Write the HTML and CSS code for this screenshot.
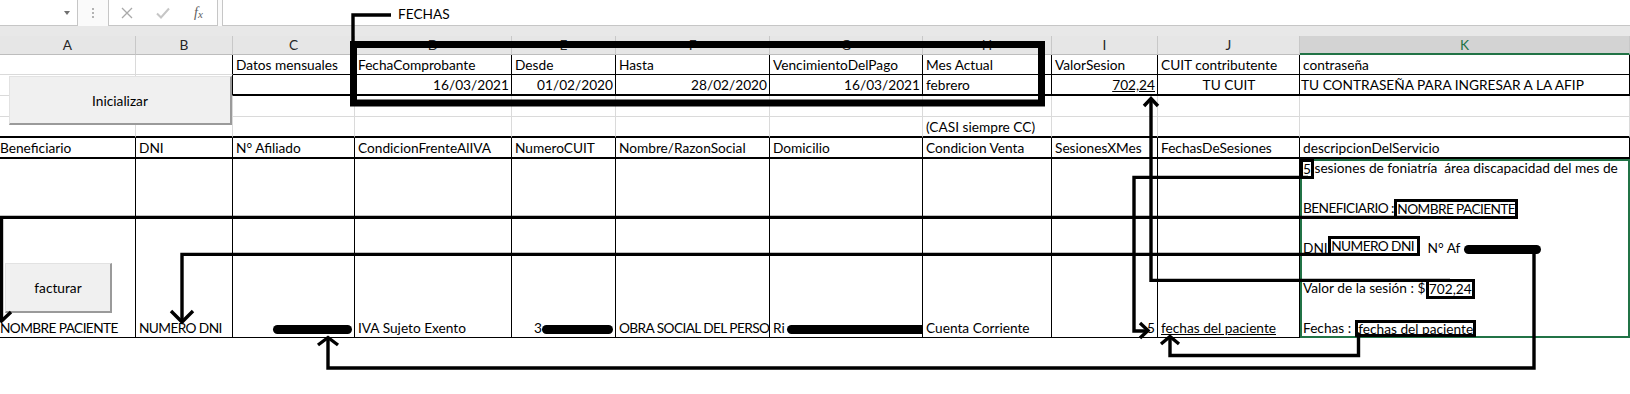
FILE: index.html
```html
<!DOCTYPE html>
<html lang="es">
<head>
<meta charset="utf-8">
<title>Facturación AFIP</title>
<link rel="stylesheet" href="styles.css">
</head>
<body>
<div class="app">
  <div class="formula-bar">
    <div class="namebox"><span class="dropdown"></span></div>
    <div class="grip"><i></i><i></i><i></i></div>
    <div class="fxbox">
      <svg class="ico-x" width="12" height="12" viewBox="0 0 12 12"><path d="M1 1L11 11M11 1L1 11"/></svg>
      <svg class="ico-check" width="14" height="12" viewBox="0 0 14 12"><path d="M1 6.5L5 10.5L13 1.5"/></svg>
      <span class="fx">f<span class="fx-x">x</span></span>
    </div>
    <div class="formula-input"></div>
  </div>
  <div class="band"></div>

  <div class="sheet">
    <div class="c h">A</div><div class="c h">B</div><div class="c h">C</div><div class="c h">D</div><div class="c h">E</div><div class="c h">F</div><div class="c h">G</div><div class="c h">H</div><div class="c h">I</div><div class="c h">J</div><div class="c h sel">K</div>

    <div class="c"></div>
    <div class="c br"></div>
    <div class="c br bb"><span>Datos mensuales</span></div>
    <div class="c br bb"><span>FechaComprobante</span></div>
    <div class="c br bb"><span>Desde</span></div>
    <div class="c br bb"><span>Hasta</span></div>
    <div class="c br bb"><span>VencimientoDelPago</span></div>
    <div class="c br bb"><span>Mes Actual</span></div>
    <div class="c br bb"><span>ValorSesion</span></div>
    <div class="c br bb"><span>CUIT contributente</span></div>
    <div class="c br bb"><span>contraseña</span></div>

    <div class="c"></div>
    <div class="c br"></div>
    <div class="c br bb2"></div>
    <div class="c br bb2 r"><span>16/03/2021</span></div>
    <div class="c br bb2 r"><span>01/02/2020</span></div>
    <div class="c br bb2 r"><span>28/02/2020</span></div>
    <div class="c br bb2 r"><span>16/03/2021</span></div>
    <div class="c br bb2"><span>febrero</span></div>
    <div class="c br bb2 r"><span class="u">702,24</span></div>
    <div class="c br bb2 ctr"><span>TU CUIT</span></div>
    <div class="c br bb2 tight"><span>TU CONTRASEÑA PARA INGRESAR A LA AFIP</span></div>

    <div class="c"></div><div class="c"></div><div class="c"></div><div class="c"></div><div class="c"></div><div class="c"></div><div class="c"></div><div class="c"></div><div class="c"></div><div class="c"></div><div class="c"></div>

    <div class="c bb2"></div><div class="c bb2"></div><div class="c bb2"></div><div class="c bb2"></div><div class="c bb2"></div><div class="c bb2"></div><div class="c bb2"></div>
    <div class="c bb2"><span>(CASI siempre CC)</span></div>
    <div class="c bb2"></div><div class="c bb2"></div><div class="c bb2"></div>

    <div class="c br bb2 first"><span>Beneficiario</span></div>
    <div class="c br bb2"><span>DNI</span></div>
    <div class="c br bb2"><span>N° Afiliado</span></div>
    <div class="c br bb2"><span>CondicionFrenteAlIVA</span></div>
    <div class="c br bb2"><span>NumeroCUIT</span></div>
    <div class="c br bb2"><span>Nombre/RazonSocial</span></div>
    <div class="c br bb2"><span>Domicilio</span></div>
    <div class="c br bb2"><span>Condicion Venta</span></div>
    <div class="c br bb2"><span>SesionesXMes</span></div>
    <div class="c br bb2"><span>FechasDeSesiones</span></div>
    <div class="c br bb2"><span>descripcionDelServicio</span></div>

    <div class="c br bb first"><span class="caps">NOMBRE PACIENTE</span></div>
    <div class="c br bb"><span class="caps">NUMERO DNI</span></div>
    <div class="c br bb r"><span><span class="redact redact-afil"></span></span></div>
    <div class="c br bb"><span>IVA Sujeto Exento</span></div>
    <div class="c br bb r"><span>3<span class="redact redact-cuit"></span></span></div>
    <div class="c br bb"><span class="caps">OBRA SOCIAL DEL PERSO</span></div>
    <div class="c br bb"><span>Ri<span class="redact redact-dom"></span></span></div>
    <div class="c br bb"><span>Cuenta Corriente</span></div>
    <div class="c br bb r"><span>5</span></div>
    <div class="c br bb"><span class="u">fechas del paciente</span></div>
    <div class="c desc">
      <div class="desc-lines">
        <div class="line"><span class="mark">5</span> sesiones de foniatría  área discapacidad del mes de</div>
        <div class="line"></div>
        <div class="line"><span class="caps">BENEFICIARIO :</span> <span class="mark caps">NOMBRE PACIENTE</span></div>
        <div class="line"></div>
        <div class="line">DNI <span class="mark mark-up caps">NUMERO DNI</span>   N° Af <span class="redact redact-af"></span></div>
        <div class="line"></div>
        <div class="line">Valor de la sesión : $ <span class="mark">702,24</span></div>
        <div class="line"></div>
        <div class="line">Fechas :  <span class="mark mark-sm u">fechas del paciente</span></div>
      </div>
    </div>
  </div>

  <div class="btn btn-init">Inicializar</div>
  <div class="btn btn-fact">facturar</div>

  <svg class="annot" width="1630" height="394" viewBox="0 0 1630 394">
    <text class="annot-label" x="398" y="19">FECHAS</text>
    <g class="ink">
      <path d="M391 15H353V42"/>
      <rect class="big" x="353.5" y="44.5" width="688" height="58.5"/>
      <path d="M1308 177.4H1134V331H1147"/>
      <path d="M1140 323L1148 330.5L1140 338"/>
      <path d="M1450 280.4H1151V100"/>
      <path d="M1144 106L1151 98.5L1158 106"/>
      <path d="M1420 217.4H1.5V320"/>
      <path d="M-7 312L1.5 321L11 312"/>
      <path d="M1360 254.4H182V321"/>
      <path d="M171 311L182 322L193 311"/>
      <path class="rnd" d="M1534 250V368H328V340"/>
      <path d="M318 345L328 337.5L338 345"/>
      <path class="rnd" d="M1358.5 334V355.5H1170V339"/>
      <path d="M1161 344L1170 336.5L1179 344"/>
    </g>
  </svg>
</div>
</body>
</html>
```
FILE: styles.css
```css
* { box-sizing: border-box; }
html, body { margin: 0; padding: 0; background: #fff; }
body {
  font-family: "Lato", "Liberation Sans", sans-serif;
  font-size: 13.7px;
  color: #000;
}
.app {
  position: relative;
  width: 1630px;
  height: 394px;
  overflow: hidden;
  background: #fff;
}

/* formula bar */
.formula-bar { display: flex; height: 26px; background: #fafafa; }
.namebox {
  width: 78px; height: 26px; background: #fff;
  border-right: 1px solid #c6c6c6; border-bottom: 1px solid #c6c6c6;
  display: flex; align-items: center; justify-content: flex-end; padding-right: 7px;
}
.dropdown {
  width: 0; height: 0;
  border-left: 3.5px solid transparent; border-right: 3.5px solid transparent;
  border-top: 4px solid #707070;
}
.grip { width: 30px; display: flex; flex-direction: column; align-items: center; justify-content: center; gap: 2px; }
.grip i { display: block; width: 2px; height: 2px; background: #b3b3b3; }
.fxbox {
  width: 110px; height: 26px; background: #fff;
  border: 1px solid #c6c6c6; border-top: 0;
  display: flex; align-items: center; padding-left: 12px;
}
.ico-x { margin-right: 23px; }
.ico-x path { stroke: #a9a9a9; stroke-width: 1.3; fill: none; }
.ico-check { margin-right: 24px; }
.ico-check path { stroke: #c6c6c6; stroke-width: 2; fill: none; }
.fx { font-family: "Liberation Serif", serif; font-style: italic; font-size: 14px; color: #5e5e5e; }
.fx-x { font-size: 11px; position: relative; top: 1px; }
.formula-input {
  flex: 1; margin-left: 4px; height: 26px; background: #fff;
  border-left: 1px solid #c6c6c6; border-bottom: 1px solid #c6c6c6;
}
.band { height: 10px; background: #e8e8e8; }

/* sheet grid */
.sheet {
  display: grid;
  grid-template-columns: 136px 97px 122px 157px 104px 154px 153px 129px 106px 142px 330px;
  grid-template-rows: 19px 20px 21px 21px 21px 21px 179px;
}
.c {
  border-right: 1px solid #dadada;
  border-bottom: 1px solid #dadada;
  padding: 0 2px 0 3px;
  display: flex;
  align-items: flex-end;
  line-height: 18px;
  white-space: nowrap;
  overflow: hidden;
}
.c.first { padding-left: 0; }
.c.tight { padding-left: 1px; }
.h {
  background: #e6e6e6;
  color: #262626;
  justify-content: center;
  align-items: center;
  padding: 0;
  border-right-color: #c8c8c8;
  border-bottom-color: #bdbdbd;
}
.h.sel { background: #d3d3d3; color: #217346; border-bottom: 2px solid #217346; }
.br { border-right-color: #000; }
.bb { border-bottom-color: #000; }
.bb2 { border-bottom: 2px solid #000; }
.r { justify-content: flex-end; }
.ctr { justify-content: center; }
.u { text-decoration: underline; }
.caps { letter-spacing: -0.6px; }

.redact {
  display: inline-block;
  height: 9px;
  background: #000;
  border-radius: 4.5px;
  vertical-align: -1px;
}
.redact-afil { width: 79px; }
.redact-cuit { width: 71px; }
.redact-dom { width: 140px; margin-left: 2px; }
.redact-af { width: 77px; }

.desc {
  display: block;
  border-right: 0;
  border-bottom: 0;
  box-shadow: inset 0 0 0 2px #217346;
  padding-left: 3px;
}
.desc-lines { margin-top: -1px; }
.line { height: 20px; line-height: 20px; white-space: pre; }

/* hand-drawn boxes around values in the description */
.mark {
  display: inline-block;
  line-height: 14px;
  vertical-align: -1px;
  outline: 3px solid #000;
  background: #fff;
}
.mark-up { vertical-align: 2px; padding-right: 3px; }
.mark-sm { line-height: 11px; }

/* form buttons floating over the sheet */
.btn {
  position: absolute;
  display: flex; align-items: center; justify-content: center;
  background: #f0f0f0;
  border-top: 1px solid #e2e2e2;
  border-left: 1px solid #e2e2e2;
  border-right: 2px solid #9a9a9a;
  border-bottom: 2px solid #9a9a9a;
  color: #000;
}
.btn-init { left: 9px; top: 76px; width: 223px; height: 49px; }
.btn-fact { left: 5px; top: 263px; width: 107px; height: 50px; }

/* hand-drawn annotations */
.annot { position: absolute; left: 0; top: 0; pointer-events: none; }
.annot-label { font-family: "Lato", "Liberation Sans", sans-serif; font-size: 13.7px; fill: #000; }
.ink path, .ink rect { fill: none; stroke: #000; stroke-width: 3.4; }
.ink rect.big { stroke-width: 7; }
.ink path.rnd { stroke-linecap: round; }
```
